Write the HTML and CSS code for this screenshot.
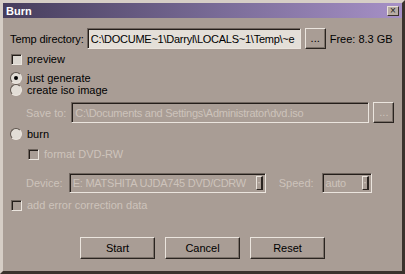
FILE: index.html
```html
<!DOCTYPE html>
<html>
<head>
<title>Burn</title>
<link rel="stylesheet" href="styles.css">
</head>
<body>
<div class="window">
	<div class="titlebar">
		<span class="title">Burn</span>
		<span class="close">&#215;</span>
	</div>
	<div class="content">
		<div class="row temp">
			<span class="label">Temp directory:</span>
			<div class="field tempfield">C:\DOCUME~1\Darryl\LOCALS~1\Temp\~e</div>
			<div class="btn dots">...</div>
			<span class="free">Free: 8.3 GB</span>
		</div>
		<div class="row check preview">
			<span class="box"></span><span>preview</span>
		</div>
		<div class="row check first">
			<span class="radio on"></span><span>just generate</span>
		</div>
		<div class="row check">
			<span class="radio"></span><span>create iso image</span>
		</div>
		<div class="row saveto indent">
			<span class="label off">Save to:</span>
			<div class="field off savefield">C:\Documents and Settings\Administrator\dvd.iso</div>
			<div class="btn dots off">...</div>
		</div>
		<div class="row check burn">
			<span class="radio"></span><span>burn</span>
		</div>
		<div class="row check format">
			<span class="box off"></span><span class="off">format DVD-RW</span>
		</div>
		<div class="row device indent">
			<span class="label off">Device:</span>
			<div class="field off select devsel">E: MATSHITA UJDA745 DVD/CDRW<span class="drop"></span></div>
			<span class="label off speedlabel">Speed:</span>
			<div class="field off select speedsel">auto<span class="drop"></span></div>
		</div>
		<div class="row check ecc">
			<span class="box off"></span><span class="off">add error correction data</span>
		</div>
		<div class="row buttons">
			<div class="btn push">Start</div>
			<div class="btn push">Cancel</div>
			<div class="btn push">Reset</div>
		</div>
	</div>
</div>
</body>
</html>
```

FILE: styles.css
```css
body{margin:0;font-family:"Liberation Sans",Arial,sans-serif;font-size:11px;color:#000;background:#a99d95;}

.window{width:405px;height:274px;box-sizing:border-box;background:#a99d95;border:3px solid;border-color:#d6cec6 #3a322c #3a322c #d6cec6;overflow:hidden;}

.titlebar{height:15px;display:flex;align-items:center;justify-content:space-between;padding:0 3px 0 3px;background:linear-gradient(to right,#463d5c,#7a6c98 55%,#a690c6);}
.title{color:#fff;font-weight:bold;font-size:11px;}
.close{width:12px;height:10px;box-sizing:border-box;background:#b8aca4;border:1px solid;border-color:#e8e0d8 #3a322c #3a322c #e8e0d8;font-size:10px;line-height:8px;text-align:center;color:#222;}

.content{padding:10px 0 0 7px;}

.row{display:flex;align-items:center;white-space:nowrap;}
.temp{height:21px;}
.temp .label{margin-right:3px;letter-spacing:-0.1px;}
.label{margin-right:7px;}
.off{color:#cdc3bb;}

.field{height:21px;box-sizing:border-box;border:1px solid;border-color:#6f655e #ebe5de #ebe5de #6f655e;box-shadow:inset 1px 1px 0 #241e1a;padding:0 0 0 3px;display:flex;align-items:center;overflow:hidden;letter-spacing:-0.25px;}
.tempfield{width:214px;background:#e4dfd8;}
.free{margin-left:4px;}

.btn{box-sizing:border-box;border:1px solid;border-color:#ebe5de #2a2420 #2a2420 #ebe5de;box-shadow:inset -1px -1px 0 #7b7169;display:flex;align-items:center;justify-content:center;}
.dots{width:21px;height:21px;margin-left:4px;padding-bottom:2px;}

.check span:last-child{margin-left:5px;}
.check{height:12px;}
.box{width:11px;height:11px;box-sizing:border-box;margin-left:1px;border:1px solid;border-color:#6f655e #ebe5de #ebe5de #6f655e;box-shadow:inset 1px 1px 0 #241e1a;background:#dcd7d0;}
.box.off{background:transparent;}
.radio{width:12px;height:12px;box-sizing:border-box;border-radius:50%;border:1px solid;border-color:#5d544d #ebe5de #ebe5de #5d544d;background:#e2ddd6;position:relative;}
.radio.on:after{content:"";position:absolute;left:3px;top:3px;width:4px;height:4px;border-radius:50%;background:#000;}

.preview{margin-top:4px;}
.first{margin-top:7px;}
.indent{padding-left:16px;}
.saveto{height:21px;margin-top:6px;}
.saveto .label{margin-right:5px;}
.savefield{width:298px;}
.burn{margin-top:5px;}
.format{margin-top:8px;padding-left:17px;}

.device{height:21px;margin-top:12px;}
.device .label{margin-right:6px;}
.select{height:20px;position:relative;}
.devsel{width:197px;}
.speedlabel{margin-left:13px;}
.device .speedlabel{margin-right:8px;}
.speedsel{width:50px;}
.drop{position:absolute;right:2px;top:2px;width:7px;height:14px;border-right:2px solid #2a2420;border-bottom:1px solid #2a2420;border-left:1px solid #ebe5de;border-top:1px solid #ebe5de;box-sizing:border-box;}
.drop:after{content:"";position:absolute;left:1px;top:5px;border-left:1px solid transparent;border-right:1px solid transparent;border-top:2px solid #cdc3bb;}

.ecc{margin-top:6px;}

.buttons{margin-top:26px;height:22px;justify-content:center;gap:10px;padding-right:7px;}
.push{width:75px;height:22px;}
```
